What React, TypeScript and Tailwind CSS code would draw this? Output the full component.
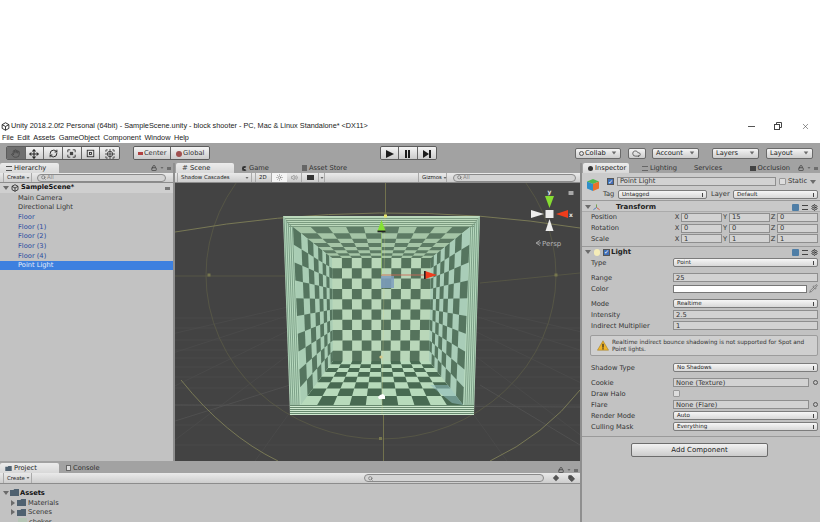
import React from 'react';
import { Cloud, Hand, Lock, Move, Pipette, RefreshCw, Search, Settings, Sun, Tag, Volume2, X } from 'lucide-react';

type P = [number, number];

const mix = (a: P, b: P, t: number): P => [a[0] + (b[0] - a[0]) * t, a[1] + (b[1] - a[1]) * t];

// depth is foreshortened, so cells near the camera come out larger
const depth = (t: number) => {
  const k = 0.8;
  return (1 - 1 / (1 + k * t)) / (1 - 1 / (1 + k));
};

// a0,a1 front edge; b0,b1 back edge
const wallCells = (a0: P, a1: P, b0: P, b1: P, rows: number, persp: boolean) => {
  const cells: string[] = [];
  const at = (u: number, v: number) => {
    const d = persp ? depth(v) : v;
    return mix(mix(a0, a1, u), mix(b0, b1, u), d);
  };
  for (let i = 0; i < 10; i++) {
    for (let j = 0; j < rows; j++) {
      if ((i + j) % 2 === 0) continue;
      const c = [at(i / 10, j / rows), at((i + 1) / 10, j / rows), at((i + 1) / 10, (j + 1) / rows), at(i / 10, (j + 1) / rows)];
      cells.push(c.map((p) => p.join(',')).join(' '));
    }
  }
  return cells;
};

const FTL: P = [293, 227];
const FTR: P = [470, 227];
const FBR: P = [463, 405];
const FBL: P = [301, 405];
const BTL: P = [332, 258];
const BTR: P = [431, 258];
const BBR: P = [429, 361];
const BBL: P = [333, 361];

const poly = (...pts: P[]) => pts.map((p) => p.join(',')).join(' ');

const Wall = ({ a0, a1, b0, b1, light, dark, rows = 8, persp = true }: { a0: P; a1: P; b0: P; b1: P; light: string; dark: string; rows?: number; persp?: boolean }) => (
  <g>
    <polygon points={poly(a0, a1, b1, b0)} fill={light} />
    {wallCells(a0, a1, b0, b1, rows, persp).map((c, i) => (
      <polygon key={i} points={c} fill={dark} />
    ))}
  </g>
);

const range = (n: number) => Array.from({ length: n }, (_, i) => i);

const SceneDrawing = () => (
  <svg viewBox="175 183 405 278" className="block w-[405px] h-[278px]">
    <rect x="175" y="183" width="405" height="278" fill="#434343" />
    {/* ground grid */}
    {[318, 328, 340, 350, 358, 367, 377, 388, 405, 425, 445].map((y) => (
      <line key={y} x1="175" x2="580" y1={y} y2={y} stroke="#4b4b4b" strokeWidth="0.8" />
    ))}
    {[-420, -300, -200, -130, -70, 70, 130, 200, 300, 420].map((d) => (
      <line key={d} x1={381 + d * 0.15} y1="300" x2={381 + d * 1.8} y2="461" stroke="#4b4b4b" strokeWidth="0.8" />
    ))}
    <line x1="175" y1="405" x2="580" y2="407" stroke="#565656" strokeWidth="0.8" />
    <line x1="175" y1="421" x2="290" y2="385" stroke="#535353" strokeWidth="0.8" />
    <line x1="580" y1="445" x2="480" y2="385" stroke="#535353" strokeWidth="0.8" />
    {/* light range gizmo */}
    <ellipse cx="381" cy="275" rx="175" ry="164" fill="none" stroke="#5a5a46" strokeWidth="0.8" />
    <path d="M175 276 L 290 276 M480 283 L 580 273" stroke="#5a5a46" strokeWidth="0.8" fill="none" />
    <path d="M175 232 Q 381 196 580 228" stroke="#87875a" strokeWidth="0.8" fill="none" />
    <path d="M181 380 Q 225 435 278 461 M490 461 Q 545 435 580 390" stroke="#87875a" strokeWidth="0.8" fill="none" />
    <rect x="207.5" y="273.5" width="3" height="3" fill="#76764e" />
    <rect x="554.5" y="273.5" width="3" height="3" fill="#76764e" />
    <rect x="379" y="437" width="3" height="3" fill="#76764e" />

    {/* the box */}
    <polygon points={poly([283, 216], [480, 216], [474, 415], [290, 415])} fill="#b8dabf" />
    {range(5).map((i) => (
      <line key={i} x1={284 + i * 2} y1="216" x2={291 + i * 2} y2="405" stroke="#6f937b" strokeWidth="0.8" />
    ))}
    {range(5).map((i) => (
      <line key={i} x1={479 - i * 2} y1="216" x2={473 - i * 2} y2="405" stroke="#6f937b" strokeWidth="0.8" />
    ))}
    <Wall a0={BTL} a1={BTR} b0={BBL} b1={BBR} light="#b9d7b9" dark="#55735c" rows={10} persp={false} />
    <Wall a0={FTL} a1={FTR} b0={BTL} b1={BTR} light="#a5c5a6" dark="#5d7b64" />
    <Wall a0={FBL} a1={FTL} b0={BBL} b1={BTL} light="#a9cdb4" dark="#55755f" />
    <Wall a0={FTR} a1={FBR} b0={BTR} b1={BBR} light="#a9cdb8" dark="#55755f" />
    <Wall a0={FBL} a1={FBR} b0={BBL} b1={BBR} light="#b7dabb" dark="#486a52" />
    <polygon points={poly([430, 385], [448, 385], [463, 405], [452, 403])} fill="#8fbcc0" opacity="0.55" />
    {/* stacked edge bands */}
    <polygon points={poly([283, 216], [480, 216], [470, 227], [293, 227])} fill="#bcd9bc" />
    {range(5).map((i) => (
      <rect key={i} x={285 + i} y={218 + i * 2} width={193 - i * 2} height="1" fill="#7b9b80" />
    ))}
    <rect x="290" y="405" width="184" height="10" fill="#d0e9d0" />
    {range(5).map((i) => (
      <rect key={i} x="290" y={405 + i * 2} width="184" height="1" fill="#67896f" />
    ))}

    {/* handles */}
    <line x1="385.5" y1="183" x2="385.5" y2="216" stroke="#77774f" strokeWidth="0.9" />
    <line x1="383.5" y1="415" x2="383.5" y2="461" stroke="#77774f" strokeWidth="0.9" />
    <line x1="385" y1="216" x2="382" y2="415" stroke="#d8d890" strokeWidth="0.6" opacity="0.45" />
    <rect x="384" y="214.5" width="3" height="3" fill="#e4e36c" />
    <circle cx="381" cy="357" r="1.6" fill="#d8c98a" />
    <path d="M378 397 l2 -2 l3 -1 l2 2 l0 3 l-6 0 z" fill="#fff" />
    <rect x="381" y="276" width="13" height="12" fill="#7e9fbe" opacity="0.85" />
    <line x1="381" y1="275" x2="425" y2="275" stroke="#cc6a58" strokeWidth="0.9" />
    <polygon points="425,271 437,275 425,279" fill="#ef3d1e" />
    <rect x="424" y="271" width="1.6" height="8" fill="#222" />
    <line x1="381.5" y1="230" x2="381.5" y2="275" stroke="#9ecf6a" strokeWidth="0.6" />
    <polygon points="381.5,220 385.5,231 377.5,231" fill="#85e034" />
    <rect x="377.5" y="230.5" width="8" height="1.8" fill="#222" />
    {/* orientation gizmo */}
    <rect x="545.5" y="210" width="8" height="8" fill="#ececec" />
    <polygon points="549.5,208 545,196 554,196" fill="#86dc32" />
    <polygon points="556,214 568,210 568,218" fill="#ee3c1c" />
    <polygon points="544,214 531,210 531,218" fill="#eeeeee" />
    <polygon points="549.5,219 545.5,231 553.5,231" fill="#eeeeee" />
    <rect x="568.5" y="191" width="5" height="4" rx="0.5" fill="#a8a8a8" />
    <text x="549.5" y="194" textAnchor="middle" fontSize="6" fontWeight="700" fill="#e6e6e6" fontFamily="'DejaVu Sans',sans-serif">y</text>
    <text x="571" y="216.5" textAnchor="middle" fontSize="6" fontWeight="700" fill="#e6e6e6" fontFamily="'DejaVu Sans',sans-serif">x</text>
    <path d="M540 240.5 L536 243 L540 245.5 M541 243 L537 243" stroke="#b5b5b5" strokeWidth="0.8" fill="none" />
    <text x="542" y="245.5" fontSize="7" fill="#b5b5b5" fontFamily="'DejaVu Sans',sans-serif">Persp</text>
  </svg>
);

const UnityLogo = ({ className = 'w-[10px] h-[10px]', color = '#222' }: { className?: string; color?: string }) => (
  <svg viewBox="0 0 12 12" className={className} fill="none" stroke={color} strokeWidth="1.2">
    <path d="M6 1 L10.5 3.5 V8.5 L6 11 L1.5 8.5 V3.5 Z M6 6 V11 M6 6 L1.5 3.5 M6 6 L10.5 3.5" />
  </svg>
);

const Caret = ({ className = '' }: { className?: string }) => (
  <span className={`w-0 h-0 shrink-0 border-l-[3px] border-r-[3px] border-t-[4px] border-l-transparent border-r-transparent border-t-[#6b6b6b] ${className}`} />
);

const ToolBtn = ({ children, active, w = 'w-[18.67px]' }: { children: React.ReactNode; active?: boolean; w?: string }) => (
  <div className={`${w} h-[13px] flex items-center justify-center border-r border-[#666] last:border-r-0 ${active ? 'bg-[#6f6f6f]' : 'bg-gradient-to-b from-[#f4f4f4] to-[#c8c8c8]'}`}>
    {children}
  </div>
);

const ToolGroup = ({ children, className = '' }: { children: React.ReactNode; className?: string }) => (
  <div className={`flex h-[14px] border border-[#5c5c5c] rounded-[2px] overflow-hidden ${className}`}>{children}</div>
);

const TopDrop = ({ label, w, ml, icon }: { label: string; w: string; ml: string; icon?: React.ReactNode }) => (
  <div className={`${w} ${ml} h-[11px] flex items-center px-[3px] border border-[#6a6a6a] rounded-[2px] bg-gradient-to-b from-[#f4f4f4] to-[#cdcdcd] text-[6.7px] text-[#222]`}>
    {icon}
    <span>{label}</span>
    <Caret className="ml-auto scale-75" />
  </div>
);

const Tabbed = ({ label, icon, active, w, pl = 'pl-0' }: { label: string; icon?: React.ReactNode; active?: boolean; w: string; pl?: string }) => (
  <div className={`${w} ${pl} h-[10px] shrink-0 flex items-center gap-[2px] text-[6.7px] ${active ? 'bg-gradient-to-b from-[#ececec] to-[#d8d8d8] rounded-t-[2px] text-[#222]' : 'text-[#303030]'}`}>
    {icon}
    <span>{label}</span>
  </div>
);

const PanelLock = () => (
  <div className="ml-auto mr-[2px] flex items-center gap-[2px]">
    <Lock className="w-[6px] h-[6px] text-[#444]" strokeWidth={3} />
    <Caret className="scale-50" />
    <span className="w-[4px] h-[3px] bg-[#6d6d6d]" />
  </div>
);

const SearchBox = ({ w, text, ml = '' }: { w: string; text?: string; ml?: string }) => (
  <div className={`${w} ${ml} h-[8px] flex items-center gap-[1px] pl-[3px] border border-[#8a8a8a] rounded-full bg-[#d4d4d4] text-[5.5px] text-[#888]`}>
    <Search className="w-[5px] h-[5px] text-[#666]" strokeWidth={3} />
    {text && <span>{text}</span>}
  </div>
);

const Bar = ({ children }: { children: React.ReactNode }) => (
  <div className="h-[10px] shrink-0 flex items-center bg-gradient-to-b from-[#eaeaea] to-[#cdcdcd] border-b border-[#8c8c8c]">{children}</div>
);

const BarBtn = ({ label, w, ml = '', caret = true }: { label: string; w: string; ml?: string; caret?: boolean }) => (
  <div className={`${w} ${ml} h-full flex items-center justify-between pl-[3px] pr-[1px] border-x border-[#aaa] text-[5.4px] text-[#222]`}>
    <span className="whitespace-nowrap">{label}</span>
    {caret && <Caret className="scale-50" />}
  </div>
);

const Row = ({ label, color = 'text-[#333]', selected }: { label: string; color?: string; selected?: boolean }) => (
  <div className={`h-[9.67px] flex items-center pl-[18px] text-[6.7px] ${selected ? 'bg-[#3d80df] text-[#e6eefb]' : color}`}>{label}</div>
);

const Folder = ({ className = 'w-[9px] h-[7px]' }: { className?: string }) => (
  <svg viewBox="0 0 9 7" className={`${className} shrink-0`}>
    <path d="M0 1 H3.5 L4.2 0 H9 V7 H0 Z" fill="#4f6170" />
  </svg>
);

const Hierarchy = () => (
  <div className="w-[173px] shrink-0 flex flex-col bg-[#c2c2c2]">
    <div className="h-[10px] flex items-center bg-[#a2a2a2]">
      <Tabbed label="Hierarchy" w="w-[59px]" pl="pl-[6px]" active icon={<span className="w-[6px] h-[5px] border-y border-[#555]" />} />
      <PanelLock />
    </div>
    <Bar>
      <BarBtn label="Create" w="w-[29px]" ml="ml-[3px]" />
      <SearchBox w="w-[129px]" ml="ml-[5px]" text="All" />
    </Bar>
    <div className="h-[10px] flex items-center gap-[2px] pl-[3px] bg-[#cfcfcf] text-[6.6px] font-bold text-[#111]">
      <Caret />
      <UnityLogo className="w-[8px] h-[8px]" />
      <span>SampleScene*</span>
      <span className="ml-auto mr-[3px] w-[5px] h-[3px] bg-[#777]" />
    </div>
    <div className="flex flex-col">
      <Row label="Main Camera" />
      <Row label="Directional Light" />
      <Row label="Floor" color="text-[#2a4aa0]" />
      <Row label="Floor (1)" color="text-[#2a4aa0]" />
      <Row label="Floor (2)" color="text-[#2a4aa0]" />
      <Row label="Floor (3)" color="text-[#2a4aa0]" />
      <Row label="Floor (4)" color="text-[#2a4aa0]" />
      <Row label="Point Light" selected />
    </div>
  </div>
);

const SceneView = () => (
  <div className="w-[405px] shrink-0 flex flex-col">
    <div className="h-[10px] flex items-center bg-[#a2a2a2]">
      <div className="w-[1px]" />
      <Tabbed label="Scene" w="w-[58px]" pl="pl-[6px]" active icon={<span className="w-[6px] text-[7px] leading-none text-[#444]">#</span>} />
      <Tabbed label="Game" w="w-[60px]" pl="pl-[8px]" icon={<span className="w-[5px] h-[5px] rounded-full border-2 border-[#333] border-r-transparent" />} />
      <Tabbed label="Asset Store" w="w-[70px]" pl="pl-[8px]" icon={<span className="w-[5px] h-[6px] bg-[#666]" />} />
    </div>
    <Bar>
      <BarBtn label="Shadow Cascades" w="w-[75px]" ml="ml-[2px]" />
      <BarBtn label="2D" w="w-[17px]" ml="ml-[3px]" caret={false} />
      <div className="w-[15px] h-full flex items-center justify-center bg-[#f4f4f4]">
        <Sun className="w-[7px] h-[7px] text-[#777]" />
      </div>
      <div className="w-[15px] h-full flex items-center justify-center border-r border-[#aaa]">
        <Volume2 className="w-[7px] h-[7px] text-[#888]" strokeWidth={2.5} />
      </div>
      <div className="w-[16px] h-full flex items-center justify-center">
        <span className="w-[7px] h-[5px] bg-[#333] border border-[#333]" />
      </div>
      <div className="w-[7px] h-full flex items-center border-x border-[#aaa]">
        <Caret className="scale-50" />
      </div>
      <BarBtn label="Gizmos" w="w-[29px]" ml="ml-auto" />
      <SearchBox w="w-[123px]" ml="ml-[6px] mr-[4px]" text="All" />
    </Bar>
    <SceneDrawing />
  </div>
);

const ProjectPanel = () => (
  <div className="flex-1 flex flex-col bg-[#c2c2c2] overflow-hidden">
    <div className="h-[12px] shrink-0 flex items-end bg-[#a2a2a2]">
      <Tabbed label="Project" w="w-[59px]" pl="pl-[5px]" active icon={<Folder className="w-[7px] h-[5px]" />} />
      <Tabbed label="Console" w="w-[50px]" pl="pl-[7px]" icon={<span className="w-[5px] h-[6px] bg-[#ddd] border border-[#666]" />} />
      <PanelLock />
    </div>
    <div className="h-[11px] shrink-0 flex items-center bg-gradient-to-b from-[#eaeaea] to-[#cdcdcd] border-b border-[#8c8c8c]">
      <BarBtn label="Create" w="w-[29px]" ml="ml-[3px]" />
      <SearchBox w="w-[180px]" ml="ml-auto" />
      <div className="w-[36px] h-full flex items-center justify-end gap-[9px] pr-[5px]">
        <span className="w-[6px] h-[6px] bg-[#555] rotate-45 scale-75" />
        <Tag className="w-[7px] h-[7px] text-[#444] fill-[#555]" />
      </div>
    </div>
    <div className="pt-[4px] pl-[3px] text-[6.7px] text-[#333]">
      <div className="h-[9.7px] flex items-center gap-[1px] font-bold text-[#111]">
        <Caret />
        <Folder />
        <span>Assets</span>
      </div>
      <div className="h-[9.7px] flex items-center gap-[2px] pl-[8px]">
        <span className="w-0 h-0 border-y-[3px] border-l-[4px] border-y-transparent border-l-[#6b6b6b]" />
        <Folder />
        <span>Materials</span>
      </div>
      <div className="h-[9.7px] flex items-center gap-[2px] pl-[8px]">
        <span className="w-0 h-0 border-y-[3px] border-l-[4px] border-y-transparent border-l-[#6b6b6b]" />
        <Folder />
        <span>Scenes</span>
      </div>
      <div className="h-[9.7px] flex items-center gap-[2px] pl-[15px]">
        <span className="w-[9px] h-[7px] bg-[#b5c5b5]" />
        <span>cheker</span>
      </div>
    </div>
  </div>
);

const Field = ({ value, className = '' }: { value?: string; className?: string }) => (
  <div className={`h-[9px] flex items-center pl-[2px] bg-[#d2d2d2] border border-[#8e8e8e] text-[6.7px] text-[#333] ${className}`}>{value}</div>
);

const Drop = ({ value, className = '' }: { value: string; className?: string }) => (
  <div className={`h-[9px] flex items-center justify-between px-[3px] rounded-[2px] border border-[#7c7c7c] bg-gradient-to-b from-[#f6f6f6] to-[#d8d8d8] text-[5.6px] text-[#222] ${className}`}>
    <span>{value}</span>
    <span className="w-[1.5px] h-[4px] bg-[#444]" />
  </div>
);

const Prop = ({ label, children, className = '' }: { label: string; children: React.ReactNode; className?: string }) => (
  <div className={`h-[11px] shrink-0 flex items-center pl-[9px] pr-[2px] text-[6.7px] text-[#333] ${className}`}>
    <span className="w-[82px] shrink-0">{label}</span>
    {children}
  </div>
);

const Vec = ({ label, x, y, z }: { label: string; x: string; y: string; z: string }) => (
  <div className="h-[10.7px] flex items-center pl-[9px] pr-[2px] text-[6.7px] text-[#333]">
    <span className="w-[83px] shrink-0">{label}</span>
    {[['X', x], ['Y', y], ['Z', z]].map(([a, v]) => (
      <div key={a} className="flex-1 flex items-center gap-[1px]">
        <span className="w-[6px] text-center">{a}</span>
        <Field value={v} className="flex-1" />
      </div>
    ))}
  </div>
);

const CompIcons = () => (
  <div className="ml-auto flex items-center gap-[3px] pr-[1px]">
    <span className="w-[7px] h-[7px] bg-[#4f7ea6] rounded-[1px]" />
    <span className="w-[6px] h-[5px] border-y border-[#444]" />
    <Settings className="w-[7px] h-[7px] text-[#333]" strokeWidth={3} />
  </div>
);

const Picker = () => (
  <span className="ml-[4px] w-[5px] h-[5px] shrink-0 rounded-full border border-[#555]" />
);

const Inspector = () => (
  <div className="flex-1 flex flex-col bg-[#c2c2c2] overflow-hidden">
    <div className="h-[10px] shrink-0 flex items-center bg-[#a2a2a2]">
      <div className="w-[1px]" />
      <Tabbed label="Inspector" w="w-[46px]" pl="pl-[5px]" active icon={<span className="w-[5px] h-[5px] rounded-full bg-[#333]" />} />
      <Tabbed label="Lighting" w="w-[52px]" pl="pl-[13px]" icon={<span className="w-[6px] h-[5px] border-y border-[#666]" />} />
      <Tabbed label="Services" w="w-[54px]" pl="pl-[13px]" />
      <Tabbed label="Occlusion" w="w-[55px]" pl="pl-[15px]" icon={<span className="w-[6px] h-[5px] bg-[#444]" />} />
      <PanelLock />
    </div>
    <div className="h-[28px] shrink-0 flex bg-[#cbcbcb] border-b border-[#9a9a9a]">
      <svg viewBox="0 0 14 14" className="w-[14px] h-[14px] ml-[4px] mt-[5px] shrink-0">
        <polygon points="7,1 13,3.5 7,6 1,3.5" fill="#4fb84f" />
        <polygon points="1,3.5 7,6 7,13 1,10.5" fill="#2e8fc9" />
        <polygon points="13,3.5 7,6 7,13 13,10.5" fill="#e8712a" />
      </svg>
      <div className="flex-1 pt-[4px] pl-[7px] pr-[2px] flex flex-col gap-[4px]">
        <div className="h-[9px] flex items-center">
          <span className="w-[7px] h-[7px] flex items-center justify-center bg-[#3f6fb8] border border-[#555] text-[6px] leading-none text-white">✓</span>
          <Field value="Point Light" className="ml-[3px] w-[159px]" />
          <span className="ml-[3px] w-[7px] h-[7px] rounded-[1px] bg-[#ddd] border border-[#999]" />
          <span className="ml-[2px] text-[6.7px] text-[#333]">Static</span>
          <Caret className="ml-auto mr-[2px]" />
        </div>
        <div className="h-[9px] flex items-center text-[6.7px] text-[#333]">
          <span className="-ml-[4px] w-[14px] shrink-0">Tag</span>
          <Drop value="Untagged" className="ml-[1px] w-[89px]" />
          <span className="ml-[4px]">Layer</span>
          <Drop value="Default" className="ml-auto w-[85px]" />
        </div>
      </div>
    </div>
    <div className="h-[11px] shrink-0 flex items-center pt-[2px] pl-[3px] pr-[1px] bg-[#c9c9c9] border-b border-[#ababab] text-[7px] font-bold text-[#222]">
      <Caret />
      <svg viewBox="0 0 8 8" className="w-[7px] h-[7px] ml-[2px]" fill="none" strokeWidth="1">
        <path d="M4 4 V0.5" stroke="#6c9c3c" />
        <path d="M4 4 L7.5 6.5" stroke="#d05030" />
        <path d="M4 4 L0.5 6.5" stroke="#3f73b8" />
      </svg>
      <span className="ml-[16px]">Transform</span>
      <CompIcons />
    </div>
    <div className="shrink-0 pb-[2px] border-b border-[#9a9a9a]">
      <Vec label="Position" x="0" y="15" z="0" />
      <Vec label="Rotation" x="0" y="0" z="0" />
      <Vec label="Scale" x="1" y="1" z="1" />
    </div>
    <div className="h-[10px] shrink-0 flex items-center pl-[3px] pr-[1px] text-[7px] font-bold text-[#222]">
      <Caret />
      <span className="ml-[3px] w-[6px] h-[7px] rounded-full bg-[#f5ecb8]" />
      <span className="ml-[3px] w-[7px] h-[7px] flex items-center justify-center bg-[#3f6fb8] border border-[#555] text-[6px] leading-none font-normal text-white">✓</span>
      <span className="ml-[1px]">Light</span>
      <CompIcons />
    </div>
    <Prop label="Type"><Drop value="Point" className="flex-1" /></Prop>
    <Prop label="Range" className="mt-[4px]"><Field value="25" className="flex-1" /></Prop>
    <Prop label="Color">
      <div className="flex-1 h-[8px] bg-white border border-[#777]" />
      <Pipette className="ml-[2px] w-[9px] h-[9px] text-[#555]" strokeWidth={1.5} />
    </Prop>
    <Prop label="Mode" className="mt-[4px]"><Drop value="Realtime" className="flex-1" /></Prop>
    <Prop label="Intensity"><Field value="2.5" className="flex-1" /></Prop>
    <Prop label="Indirect Multiplier"><Field value="1" className="flex-1" /></Prop>
    <div className="mt-[4px] ml-[8px] mr-[2px] h-[21px] shrink-0 flex items-center gap-[3px] pl-[6px] pr-[4px] rounded-[2px] bg-[#cfcfcf] border border-[#9c9c9c] text-[5.8px] leading-[7px] text-[#333]">
      <svg viewBox="0 0 14 12" className="w-[12px] h-[11px] shrink-0">
        <polygon points="7,0.5 13.5,11.5 0.5,11.5" fill="#f0b429" stroke="#8a6a10" strokeWidth="0.5" />
        <rect x="6.3" y="4" width="1.4" height="4.5" fill="#222" />
        <rect x="6.3" y="9.2" width="1.4" height="1.4" fill="#222" />
      </svg>
      <span>Realtime indirect bounce shadowing is not supported for Spot and Point lights.</span>
    </div>
    <Prop label="Shadow Type" className="mt-[6px]"><Drop value="No Shadows" className="flex-1" /></Prop>
    <Prop label="Cookie" className="mt-[4px]"><Field value="None (Texture)" className="flex-1" /><Picker /></Prop>
    <Prop label="Draw Halo"><span className="w-[7px] h-[7px] rounded-[1px] bg-[#ddd] border border-[#999]" /></Prop>
    <Prop label="Flare"><Field value="None (Flare)" className="flex-1" /><Picker /></Prop>
    <Prop label="Render Mode"><Drop value="Auto" className="flex-1" /></Prop>
    <Prop label="Culling Mask"><Drop value="Everything" className="flex-1" /></Prop>
    <div className="mt-[4px] border-t border-[#9a9a9a]" />
    <div className="mt-[6px] pr-[3px] flex justify-center">
      <div className="w-[137px] h-[14px] flex items-center justify-center rounded-[2px] border border-[#6c6c6c] bg-gradient-to-b from-[#f2f2f2] to-[#cccccc] text-[7px] text-[#222]">
        Add Component
      </div>
    </div>
  </div>
);

const ScaleTool = () => (
  <svg viewBox="0 0 11 11" className="w-[9px] h-[9px]" fill="none" stroke="#222" strokeWidth="1">
    <path d="M1 4 V1 H4 M7 1 H10 V4 M10 7 V10 H7 M4 10 H1 V7" />
    <rect x="3.5" y="3.5" width="4" height="4" fill="#444" stroke="none" />
  </svg>
);

const RectTool = () => (
  <svg viewBox="0 0 11 11" className="w-[9px] h-[9px]" fill="none" stroke="#222" strokeWidth="1">
    <rect x="1.5" y="1.5" width="8" height="8" />
    <rect x="4.3" y="4.3" width="2.4" height="2.4" />
  </svg>
);

const AllTool = () => (
  <svg viewBox="0 0 11 11" className="w-[10px] h-[10px]" fill="none" stroke="#333" strokeWidth="0.9">
    <circle cx="5.5" cy="5.5" r="3" />
    <path d="M1 3 V1 H3 M8 1 H10 V3 M10 8 V10 H8 M3 10 H1 V8 M5.5 0 V11 M0 5.5 H11" />
  </svg>
);

export default function App() {
  return (
    <div className="w-[820px] h-[522px] overflow-hidden flex flex-col bg-white font-['DejaVu_Sans',sans-serif]">
      <div className="h-[120px] shrink-0" />
      <div className="h-[12px] shrink-0 flex items-center font-['Liberation_Sans',sans-serif] text-[7.3px] text-[#222]">
        <UnityLogo className="ml-[1px] w-[9px] h-[9px]" />
        <span className="ml-[1px]">Unity 2018.2.0f2 Personal (64bit) - SampleScene.unity - block shooter - PC, Mac &amp; Linux Standalone* &lt;DX11&gt;</span>
        <div className="ml-auto flex items-center">
          <span className="w-[7px] h-[1px] bg-[#555]" />
          <svg viewBox="0 0 8 8" className="ml-[19px] w-[8px] h-[8px]" fill="none" stroke="#444" strokeWidth="1">
            <rect x="0.5" y="2.5" width="5" height="5" />
            <path d="M2.5 2.5 V0.5 H7.5 V5.5 H5.5" />
          </svg>
          <X className="ml-[19px] mr-[10px] w-[9px] h-[9px] text-[#444]" strokeWidth={1.5} />
        </div>
      </div>
      <div className="h-[11px] shrink-0 flex items-center gap-[3.5px] pl-[2px] pt-[1px] font-['Liberation_Sans',sans-serif] text-[7.3px] text-[#222]">
        {['File', 'Edit', 'Assets', 'GameObject', 'Component', 'Window', 'Help'].map((m) => (
          <span key={m}>{m}</span>
        ))}
      </div>
      <div className="h-[20px] shrink-0 flex items-center bg-[#a2a2a2]">
        <ToolGroup className="ml-[6px]">
          <ToolBtn active><Hand className="w-[9px] h-[9px] text-[#444]" /></ToolBtn>
          <ToolBtn><Move className="w-[10px] h-[10px] text-[#222]" strokeWidth={2.5} /></ToolBtn>
          <ToolBtn><RefreshCw className="w-[9px] h-[9px] text-[#222]" strokeWidth={2.5} /></ToolBtn>
          <ToolBtn><ScaleTool /></ToolBtn>
          <ToolBtn><RectTool /></ToolBtn>
          <ToolBtn><AllTool /></ToolBtn>
        </ToolGroup>
        <ToolGroup className="ml-[13px] text-[6.7px] text-[#333]">
          <ToolBtn w="w-[37.5px]"><span className="w-[5px] h-[3px] bg-[#b04040] mr-[1px]" />Center</ToolBtn>
          <ToolBtn w="w-[37.5px]"><span className="w-[6px] h-[6px] rounded-full bg-[#a05050] mr-[1px]" />Global</ToolBtn>
        </ToolGroup>
        <ToolGroup className="ml-[170px]">
          <ToolBtn w="w-[18.33px]"><span className="w-0 h-0 border-y-[4px] border-l-[8px] border-y-transparent border-l-[#1c1c1c]" /></ToolBtn>
          <ToolBtn w="w-[18.33px]"><span className="w-[5px] h-[8px] border-x-2 border-[#1c1c1c]" /></ToolBtn>
          <ToolBtn w="w-[18.33px]"><span className="w-0 h-0 border-y-[4px] border-l-[6px] border-y-transparent border-l-[#1c1c1c]" /><span className="w-[2px] h-[8px] bg-[#1c1c1c]" /></ToolBtn>
        </ToolGroup>
        <TopDrop label="Collab" w="w-[46px]" ml="ml-[138px]" icon={<span className="w-[5px] h-[5px] mr-[1px] rounded-full border border-[#555]" />} />
        <div className="ml-[7px] w-[18px] h-[11px] flex items-center justify-center border border-[#6a6a6a] rounded-[2px] bg-gradient-to-b from-[#f4f4f4] to-[#cdcdcd]">
          <Cloud className="w-[9px] h-[9px] text-[#444]" />
        </div>
        <TopDrop label="Account" w="w-[47px]" ml="ml-[6px]" />
        <TopDrop label="Layers" w="w-[47px]" ml="ml-[13px]" />
        <TopDrop label="Layout" w="w-[47px]" ml="ml-[7px]" />
      </div>
      <div className="flex-1 min-h-0 flex">
        <div className="w-[580px] shrink-0 flex flex-col">
          <div className="h-[298px] shrink-0 flex">
            <Hierarchy />
            <div className="w-[2px] shrink-0 bg-[#8f8f8f]" />
            <SceneView />
          </div>
          <ProjectPanel />
        </div>
        <div className="w-[2px] shrink-0 bg-[#8f8f8f]" />
        <Inspector />
      </div>
    </div>
  );
}
